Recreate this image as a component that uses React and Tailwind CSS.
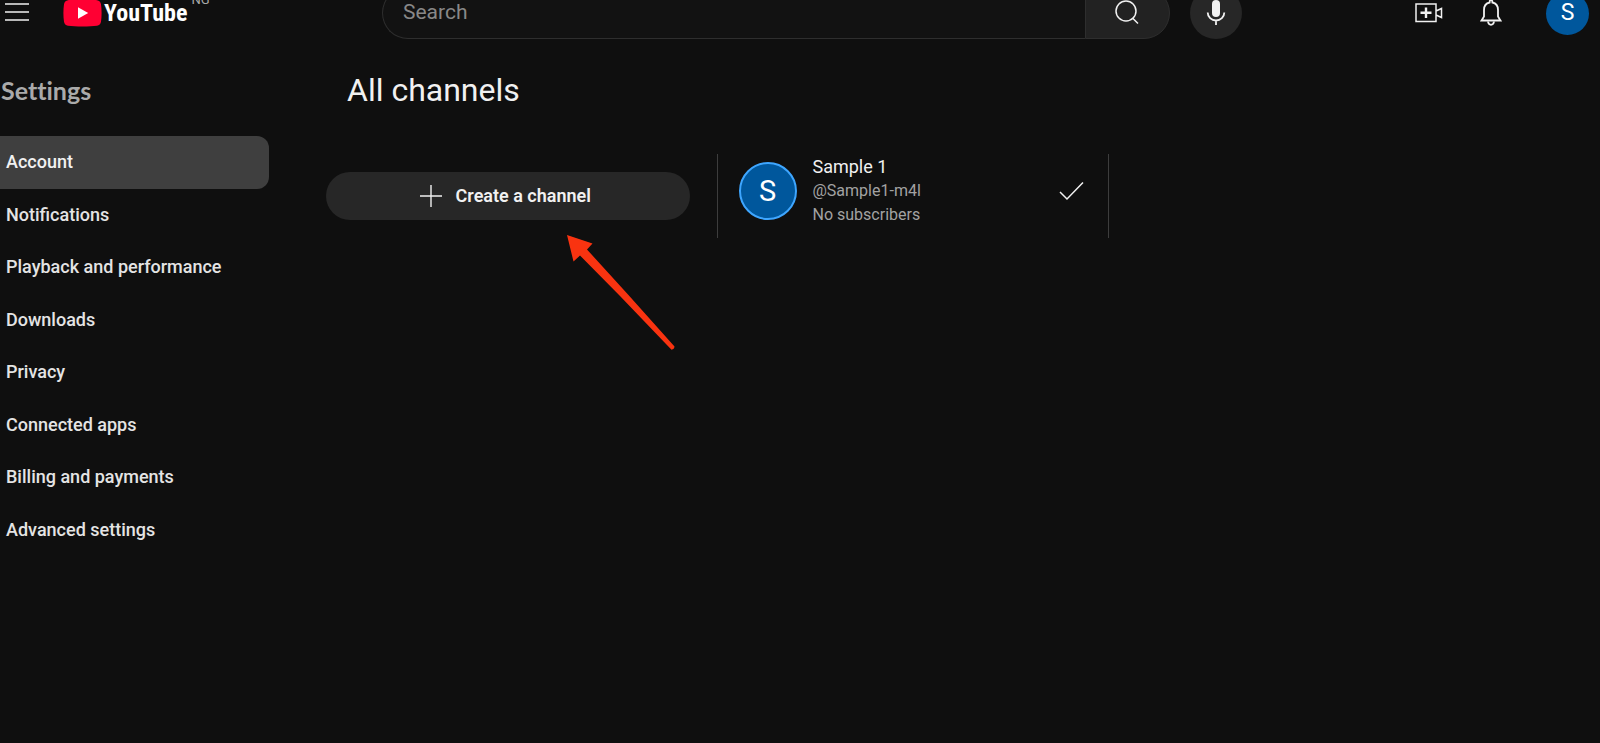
const menuItems = [
    "Account",
    "Notifications",
    "Playback and performance",
    "Downloads",
    "Privacy",
    "Connected apps",
    "Billing and payments",
    "Advanced settings",
];

function Logo() {
    return (
        <a href="#home" aria-label="YouTube home" className="flex items-center">
            <svg width="39" height="28" viewBox="0 0 39 28" aria-hidden="true">
                <path
                    d="M5 1.2C12 .3 27 .3 34 1.2c2.3.3 3.600 1.700 4 4 .8 5.500.8 12.100 0 17.600-.4 2.300-1.700 3.700-4 4-7 .9-22 .9-29 0-2.300-.3-3.600-1.700-4-4-.8-5.500-.8-12.100 0-17.600.4-2.300 1.700-3.700 4-4z"
                    fill="#ff0033"
                />
                <path d="M15 8.200v11.600L25.200 14z" fill="#fff" />
            </svg>
            <span className="ml-[2px] font-['Roboto_Condensed','Liberation_Sans_Narrow','Liberation_Sans',sans-serif] text-2xl leading-7 font-bold text-white">
                YouTube
            </span>
        </a>
    );
}

function Header() {
    return (
        <header className="-mt-[25px] flex h-[76px] items-center">
            <div className="flex w-[382px] shrink-0 items-center pl-1">
                <button aria-label="Menu" className="mr-[34px]">
                    <svg width="25" height="20" viewBox="0 0 25 20" stroke="#f1f1f1" strokeWidth="1.500">
                        <path d="M1 1h24M1 9h24M1 17h24" />
                    </svg>
                </button>
                <Logo />
                <span className="mb-[26px] ml-1 text-[13px] leading-4 text-[#aaa]">NG</span>
            </div>

            <form className="flex max-w-[860px] flex-1 items-center" onSubmit={(e) => e.preventDefault()}>
                <input
                    type="text"
                    aria-label="Search"
                    placeholder="Search"
                    className="h-[52px] min-w-0 flex-1 rounded-l-full border border-r-0 border-[#2e2e2e] bg-[#121212] pl-5 pb-[2px] text-[21px] text-white placeholder:text-[#888] outline-none"
                />
                <button
                    aria-label="Submit search"
                    className="flex h-[52px] w-[85px] items-center justify-center rounded-r-full border border-[#2e2e2e] bg-[#222] pr-[2px]"
                >
                    <svg width="26" height="26" viewBox="0 0 26 26" fill="none" stroke="#f1f1f1" strokeWidth="1.500">
                        <circle cx="12" cy="11" r="10" />
                        <path d="M18.500 18l5.500 5.500" />
                    </svg>
                </button>
                <button
                    type="button"
                    aria-label="Search with your voice"
                    className="ml-5 flex size-[52px] items-center justify-center rounded-full bg-[#272727]"
                >
                    <svg width="20" height="26" viewBox="0 0 20 26" fill="none">
                        <rect x="6" y="0" width="8" height="17" rx="4" fill="#f1f1f1" />
                        <path d="M1.700 12.500a8.300 8 0 0 0 16.600 0M10 20.500V25" stroke="#f1f1f1" strokeWidth="1.800" />
                    </svg>
                </button>
            </form>

            <div className="ml-auto flex items-center pr-[11px]">
                <button aria-label="Create">
                    <svg width="28" height="20" viewBox="0 0 28 20" fill="none" stroke="#f1f1f1" strokeWidth="1.500">
                        <path d="M1 1h20v17.500H1zM21 8l5.500-2.500v9L21 12" />
                        <path d="M11 4.500V15M5.500 9.700h11" strokeWidth="2.400" />
                    </svg>
                </button>
                <button aria-label="Notifications" className="ml-[37px]">
                    <svg width="22" height="28" viewBox="0 0 22 28" fill="none" stroke="#f1f1f1" strokeWidth="1.800">
                        <path d="M11 1.200c-.8 0-1.400.7-1.400 1.700v.6C6.100 4.200 4 7 4 11v6.500L1.500 21.500h19L18 17.500V11c0-4-2.100-6.800-5.600-7.500v-.6c0-1-.6-1.700-1.400-1.700z" />
                        <path d="M8 22.500c.2 2 1.300 3.300 3 3.300s2.800-1.300 3-3.300" />
                    </svg>
                </button>
                <button
                    aria-label="Account menu"
                    className="ml-11 flex size-[43px] items-center justify-center rounded-full bg-[#00579c] text-[23px] leading-7 text-white"
                >
                    S
                </button>
            </div>
        </header>
    );
}

function Sidebar() {
    return (
        <aside className="w-[269px] shrink-0">
            <h2 className="mt-[21px] pl-px font-[Lato,'Noto_Sans',sans-serif] text-[25px] leading-9 font-bold text-[#aaa] [font-variant-ligatures:none]">
                Settings
            </h2>
            <nav className="mt-7 grid h-[420px] grid-rows-8">
                {menuItems.map((item, i) => (
                    <a
                        key={item}
                        href={`#${item.toLowerCase().replaceAll(" ", "-")}`}
                        aria-current={i === 0 ? "page" : undefined}
                        className={
                            i === 0
                                ? "flex items-center rounded-r-xl bg-[#3f3f3f] pl-[6px] text-lg font-medium text-[#f1f1f1]"
                                : "flex items-center pl-[6px] text-lg font-medium text-[#e4e4e4]"
                        }
                    >
                        {item}
                    </a>
                ))}
            </nav>
        </aside>
    );
}

function Channels() {
    return (
        <main className="ml-[57px] max-w-[783px] flex-1">
            <h1 className="mt-[19px] pl-[21px] text-[32px] leading-10 text-[#f1f1f1]">All channels</h1>

            <div className="mt-11 grid h-[84px] grid-cols-2">
                <div className="relative flex items-center border-r border-[#3d3d3d] pr-[27px]">
                    <button className="flex h-12 w-full items-center justify-center gap-[13px] rounded-full bg-[#272727] pr-[6px] text-lg font-semibold text-[#f1f1f1]">
                        <svg width="24" height="24" viewBox="0 0 24 24" stroke="#f1f1f1" strokeWidth="1.400">
                            <path d="M12 1v22M1 12h22" />
                        </svg>
                        Create a channel
                    </button>
                    <svg
                        width="110"
                        height="118"
                        viewBox="0 0 110 118"
                        className="absolute top-20 left-[240px]"
                        aria-hidden="true"
                    >
                        <path
                            d="M1 1l25.500 8.500-5.500 6L62 60.500 108.500 112.500q-.2 2.800-3 3.200L54 62 14 21.500 7.500 27.500z"
                            fill="#f93310"
                        />
                    </svg>
                </div>

                <button className="flex items-start border-r border-[#3d3d3d] pr-6 pl-[21px] text-left">
                    <span className="mt-2 flex size-[58px] shrink-0 items-center justify-center rounded-full border-2 border-[#3ea6ff] bg-[#00579c] pt-px text-[29px] text-white">
                        S
                    </span>
                    <span className="mt-px ml-4 flex flex-col text-base leading-6 text-[#a2a2a2]">
                        <span className="text-lg leading-6 text-[#f1f1f1]">Sample 1</span>
                        <span>@Sample1-m4l</span>
                        <span>No subscribers</span>
                    </span>
                    <svg
                        width="25"
                        height="20"
                        viewBox="0 0 25 20"
                        fill="none"
                        stroke="#f1f1f1"
                        strokeWidth="1.500"
                        className="mt-[27px] ml-auto"
                        aria-hidden="true"
                    >
                        <path d="M1 11l7 7L24 1.500" />
                    </svg>
                </button>
            </div>
        </main>
    );
}

export default function App() {
    return (
        <div className="min-h-screen overflow-hidden bg-[#0f0f0f] font-[Roboto,sans-serif]">
            <Header />
            <div className="flex">
                <Sidebar />
                <Channels />
            </div>
        </div>
    );
}
